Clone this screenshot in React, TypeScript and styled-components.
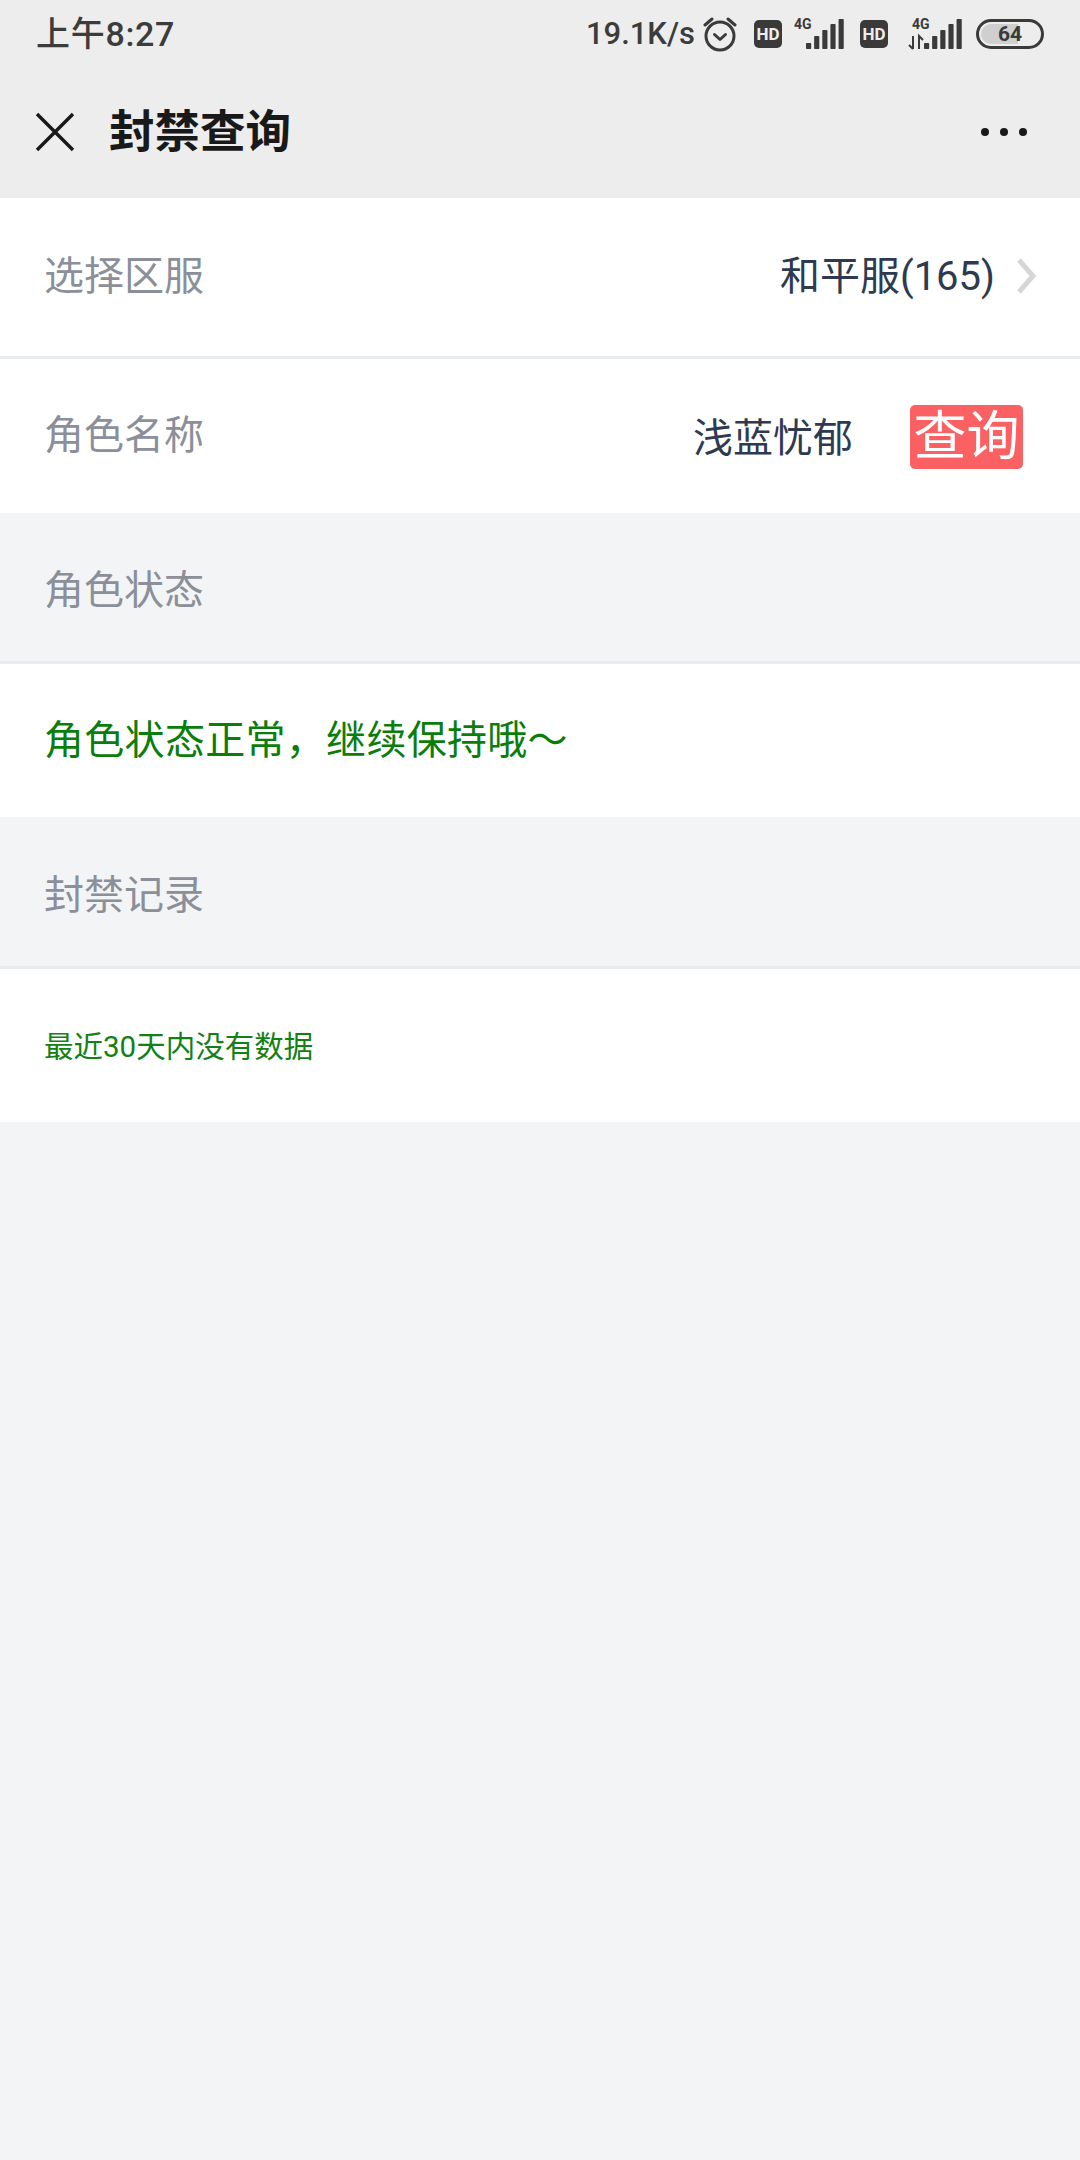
import React from "react";
import styled, { createGlobalStyle } from "styled-components";

const CJK = `Roboto, "Noto Sans CJK SC", sans-serif`;

const Global = createGlobalStyle`
  html, body { margin: 0; padding: 0; background: #f3f4f6; }
  body { font-family: ${CJK}; }
  * { box-sizing: border-box; }
`;

const Page = styled.div`
  width: 1080px;
  height: 2160px;
  background: #f3f4f6;
  display: flex;
  flex-direction: column;
  overflow: hidden;
`;

const Top = styled.header`
  height: 198px;
  background: #ededed;
  display: flex;
  flex-direction: column;
`;

const StatusBar = styled.div`
  height: 68px;
  padding: 0 36px 0 36px;
  display: flex;
  align-items: center;
  justify-content: space-between;
  color: #3c3c3c;
`;

const Time = styled.span`
  font-size: 34px;
  line-height: 68px;
  letter-spacing: 0.7px;
  font-weight: 500;
`;

const StatusRight = styled.div`
  display: flex;
  align-items: center;
`;

const Speed = styled.span`
  font-size: 31px;
  line-height: 68px;
  font-weight: 500;
  margin-right: 8px;
`;

const NavBar = styled.div`
  flex: 1;
  display: flex;
  align-items: center;
  padding: 0 52px 2px 35px;
`;

const Title = styled.h1`
  margin: 2px 0 0 34px;
  flex: 1;
  font-size: 45.5px;
  line-height: 60px;
  font-weight: 700;
  color: #191919;
`;

const Row = styled.div<{ $h: number; $line?: boolean }>`
  height: ${(p) => p.$h}px;
  background: #fff;
  padding: 0 44px;
  display: flex;
  align-items: center;
  border-bottom: ${(p) => (p.$line ? "3px solid #e9ecef" : "none")};
`;

const Section = styled.div<{ $h: number }>`
  height: ${(p) => p.$h}px;
  padding: 8px 44px 0;
  display: flex;
  align-items: center;
  border-bottom: 3px solid #e9ecef;
`;

const Label = styled.span`
  font-size: 40px;
  line-height: 56px;
  color: #8a8f99;
  flex: 1;
`;

const Value = styled.span`
  font-size: 40px;
  line-height: 56px;
  color: #2e3a50;
`;

const NameInput = styled(Value)`
  margin: 6px 57px 0 0;
`;

const QueryButton = styled.button`
  width: 113px;
  height: 64px;
  margin: 1px 13px 0 0;
  padding: 0;
  border: none;
  border-radius: 5px;
  background: #fb6163;
  color: #fff;
  font-family: ${CJK};
  font-size: 53px;
  line-height: 64px;
`;

const Chevron = styled.svg`
  width: 20px;
  height: 36px;
  margin: -2px 0 0 21px;
`;

const StatusOk = styled.span`
  font-size: 40px;
  line-height: 56px;
  letter-spacing: 0.3px;
  color: #0a7d0a;
`;

const Empty = styled.span`
  font-size: 29.5px;
  line-height: 40px;
  margin-top: 3px;
  color: #138013;
`;

const Icon = styled.svg<{ $ml?: number }>`
  display: block;
  margin-left: ${(p) => p.$ml ?? 0}px;
`;

const IconLabel = styled.text`
  font-family: Roboto, sans-serif;
  font-weight: 700;
`;

const Bars = ({ x = 0 }: { x?: number }) => (
  <>
    {[
      [x, 24, 7],
      [x + 11, 17, 14],
      [x + 22, 11, 20],
      [x + 33, 5, 26],
      [x + 44, 0, 31],
    ].map(([bx, by, bh]) => (
      <rect key={bx} x={bx} y={by + 2} width={7} height={bh - 1} rx={1} fill="#3a3a3a" />
    ))}
  </>
);

const HD = ({ ml }: { ml: number }) => (
  <Icon $ml={ml} width="28" height="28" viewBox="0 0 28 28">
    <rect width="28" height="28" rx="5" fill="#3a3a3a" />
    <IconLabel x="14" y="20" fontSize="17" fill="#ededed" textAnchor="middle">HD</IconLabel>
  </Icon>
);

export default function App() {
  return (
    <Page>
      <Global />
      <Top>
        <StatusBar>
          <Time>上午8:27</Time>
          <StatusRight>
            <Speed>19.1K/s</Speed>
            <Icon width="34" height="36" viewBox="0 0 34 36" fill="none" stroke="#3a3a3a" strokeWidth="3">
              <circle cx="17" cy="20" r="14" />
              <path d="M11.5 18.5 17 23.5l5.5-5" strokeLinecap="round" strokeLinejoin="round" />
              <path d="M2 9 9 3M32 9l-7-6" strokeLinecap="round" />
            </Icon>
            <HD ml={17} />
            <Icon $ml={12} width="52" height="34" viewBox="0 0 52 34">
              <IconLabel x="0" y="12" fontSize="14" fill="#3a3a3a" fontWeight="500">4G</IconLabel>
              <g transform="translate(12 0) scale(.74 1)"><Bars /></g>
            </Icon>
            <HD ml={14} />
            <Icon $ml={20} width="56" height="34" viewBox="0 0 56 34">
              <IconLabel x="4" y="12" fontSize="14" fill="#3a3a3a" fontWeight="500">4G</IconLabel>
              <path d="M5 19v13M5 32l-4-4M11 32V19l4 4" stroke="#3a3a3a" strokeWidth="2" fill="none" />
              <g transform="translate(16 0) scale(.74 1)"><Bars /></g>
            </Icon>
            <Icon $ml={12} width="68" height="30" viewBox="0 0 68 30">
              <rect x="1.5" y="1.5" width="65" height="27" rx="13.5" fill="none" stroke="#3a3a3a" strokeWidth="3" />
              <path d="M15 5h27v20H15a10 10 0 0 1 0-20z" fill="#cfcfcf" />
              <IconLabel x="34" y="22" fontSize="21" fill="#3a3a3a" textAnchor="middle" fontWeight="500">64</IconLabel>
            </Icon>
          </StatusRight>
        </StatusBar>
        <NavBar>
          <Icon width="40" height="40" viewBox="0 0 40 40" stroke="#191919" strokeWidth="3.4">
            <path d="M2 2l36 36M38 2 2 38" />
          </Icon>
          <Title>封禁查询</Title>
          <Icon width="48" height="10" viewBox="0 0 48 10" fill="#191919">
            <circle cx="5" cy="5" r="4" />
            <circle cx="24" cy="5" r="4" />
            <circle cx="43" cy="5" r="4" />
          </Icon>
        </NavBar>
      </Top>
      <Row $h={161} $line>
        <Label>选择区服</Label>
        <Value>和平服(165)</Value>
        <Chevron viewBox="0 0 20 36" fill="none" stroke="#d6d6d6" strokeWidth="5">
          <path d="M3 2l14 16L3 34" />
        </Chevron>
      </Row>
      <Row $h={154}>
        <Label>角色名称</Label>
        <NameInput>浅蓝忧郁</NameInput>
        <QueryButton>查询</QueryButton>
      </Row>
      <Section $h={151}>
        <Label>角色状态</Label>
      </Section>
      <Row $h={153}>
        <StatusOk>角色状态正常，继续保持哦～</StatusOk>
      </Row>
      <Section $h={152}>
        <Label>封禁记录</Label>
      </Section>
      <Row $h={153}>
        <Empty>最近30天内没有数据</Empty>
      </Row>
    </Page>
  );
}
